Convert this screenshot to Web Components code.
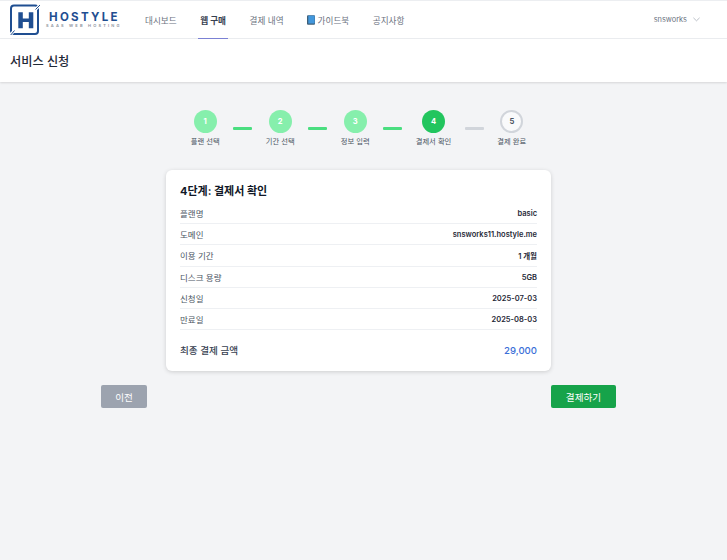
<!DOCTYPE html>
<html lang="ko">
<head>
<meta charset="utf-8">
<title>서비스 신청</title>
<style>
  html, body { margin: 0; padding: 0; }
  body {
    background: #f3f4f6;
    min-height: 560px;
    font-family: Inter, "Noto Sans CJK KR", sans-serif;
    color: #111827;
  }
</style>
</head>
<body>
<host-nav></host-nav>
<page-title>서비스 신청</page-title>
<step-bar>
  <step-item num="1" state="done">플랜 선택</step-item>
  <step-item num="2" state="done">기간 선택</step-item>
  <step-item num="3" state="done">정보 입력</step-item>
  <step-item num="4" state="current">결제서 확인</step-item>
  <step-item num="5" state="todo">결제 완료</step-item>
</step-bar>
<confirm-card heading="4단계: 결제서 확인">
  <info-row label="플랜명">basic</info-row>
  <info-row label="도메인">snsworks11.hostyle.me</info-row>
  <info-row label="이용 기간">1 개월</info-row>
  <info-row label="디스크 용량">5GB</info-row>
  <info-row label="신청일">2025-07-03</info-row>
  <info-row label="만료일">2025-08-03</info-row>
  <total-row label="최종 결제 금액">29,000</total-row>
</confirm-card>
<form-actions>
  <act-button kind="prev">이전</act-button>
  <act-button kind="pay">결제하기</act-button>
</form-actions>

<script>
class HostNav extends HTMLElement {
  constructor() {
    super();
    this.attachShadow({ mode: "open" }).innerHTML = `
      <style>
        :host {
          display: flex;
          align-items: stretch;
          height: 37px;
          background: #fff;
          border-top: 1px solid #eceef1;
          border-bottom: 1px solid #eceef1;
          padding-left: 10px;
          padding-right: 27px;
          font-size: 8.6px;
          color: #6b7280;
        }
        .logo { display: flex; align-items: center; gap: 6px; width: 124px; margin-right: 11px; }
        .word { display: flex; flex-direction: column; align-items: flex-start; margin-top: 1px; }
        .name {
          font: 700 11.5px/12px Inter, sans-serif;
          letter-spacing: 2.3px;
          color: #1f4e91;
          margin-left: 3px;
        }
        .sub {
          font: 600 4px/6px Inter, sans-serif;
          letter-spacing: 2.2px;
          color: #8b929c;
          white-space: nowrap;
        }
        nav { display: flex; gap: 23.5px; }
        a { display: flex; align-items: center; gap: 2.5px; color: inherit; white-space: nowrap; }
        a.on { color: #374151; font-weight: 600; box-shadow: 0 1px 0 0 #7c83d6; padding: 0 2px; margin: 0 -2px; }
        .user { margin-left: auto; display: flex; align-items: center; gap: 6px; font-size: 7.4px; }
      </style>
      <div class="logo">
        <svg width="30" height="31" viewBox="0 0 30 31">
          <rect x="1" y="1.5" width="27" height="28.5" rx="3" fill="none" stroke="#1f4e91" stroke-width="2"/>
          <path d="M25 6 L30 1 M0 31 L5 26" stroke="#fff" stroke-width="3"/>
          <path d="M25.5 5.5 L30 1 M.7 31 L4.5 26.5" stroke="#1f4e91" stroke-width="1"/>
          <path d="M8.3 8.3 H12.8 V14.5 H18.8 V8.3 H23.3 V24.3 H18.8 V18 H12.8 V24.3 H8.3 Z" fill="#1f4e91"/>
        </svg>
        <div class="word"><span class="name">HOSTYLE</span><span class="sub">SAAS WEB HOSTING</span></div>
      </div>
      <nav>
        <a>대시보드</a>
        <a class="on">웹 구매</a>
        <a>결제 내역</a>
        <a>
          <svg width="8" height="10" viewBox="0 0 8 10">
            <rect x="0" y=".2" width="8" height="9.6" rx="1" fill="#3f5f78"/>
            <rect x="1.3" y=".6" width="6.4" height="7.9" fill="#4297dc"/>
          </svg>가이드북</a>
        <a>공지사항</a>
      </nav>
      <div class="user">snsworks
        <svg width="7" height="5" viewBox="0 0 7 5"><path d="M.4 .8 L3.5 3.8 L6.6 .8" fill="none" stroke="#9ca3af" stroke-width=".7"/></svg>
      </div>`;
  }
}

class PageTitle extends HTMLElement {
  constructor() {
    super();
    this.attachShadow({ mode: "open" }).innerHTML = `
      <style>
        :host {
          display: flex;
          align-items: center;
          height: 43px;
          padding-left: 10px;
          background: #fff;
          box-shadow: 0 1px 2px rgba(0,0,0,.12);
          font-size: 12.2px;
          font-weight: 500;
          color: #1f2937;
          position: relative;
        }
      </style>
      <slot></slot>`;
  }
}

class StepBar extends HTMLElement {
  constructor() {
    super();
    this.attachShadow({ mode: "open" }).innerHTML = `
      <style>
        :host {
          display: flex;
          justify-content: center;
          margin-top: 28px;
          padding-right: 10px;
          height: 60px;
        }
      </style>
      <slot></slot>`;
  }
}

class StepItem extends HTMLElement {
  constructor() {
    super();
    const num = this.getAttribute("num");
    const state = this.getAttribute("state");
    this.attachShadow({ mode: "open" }).innerHTML = `
      <style>
        :host { display: flex; align-items: flex-start; }
        .col { display: flex; flex-direction: column; align-items: center; gap: 2.5px; min-width: 29px; }
        .dot {
          width: 23px; height: 23px; box-sizing: border-box;
          border-radius: 50%;
          display: flex; align-items: center; justify-content: center;
          font: 700 7.6px Inter, sans-serif;
          color: #fff;
          background: #86efac;
        }
        .current { background: #22c55e; }
        .todo { background: #f9fafb; border: 2px solid #d1d5db; color: #4b5563; }
        .label { font-size: 7.3px; line-height: 11px; color: #4b5563; white-space: nowrap; }
        .line { width: 19px; height: 3px; margin: 17px 13.5px 0; background: #4ade80; border-radius: 1px; }
        .line.off { background: #d1d5db; }
      </style>
      <div class="col">
        <div class="dot ${state}">${num}</div>
        <div class="label"><slot></slot></div>
      </div>
      ${num < 5 ? `<div class="line ${num == 4 ? "off" : ""}"></div>` : ""}`;
  }
}

class ConfirmCard extends HTMLElement {
  constructor() {
    super();
    this.attachShadow({ mode: "open" }).innerHTML = `
      <style>
        :host {
          display: block;
          box-sizing: border-box;
          width: 385px;
          height: 201px;
          margin: 0 auto;
          position: relative;
          left: -5px;
          padding: 14px 14px 0;
          background: #fff;
          border-radius: 6px;
          box-shadow: 0 1px 4px rgba(0,0,0,.16);
        }
        h3 { margin: 0 0 4px; font-size: 11px; line-height: 15px; font-weight: 700; color: #111827; }
      </style>
      <h3>${this.getAttribute("heading")}</h3>
      <slot></slot>`;
  }
}

class InfoRow extends HTMLElement {
  constructor() {
    super();
    this.attachShadow({ mode: "open" }).innerHTML = `
      <style>
        :host {
          display: flex;
          justify-content: space-between;
          align-items: center;
          box-sizing: border-box;
          height: 21.2px;
          border-bottom: 1px solid #eef0f3;
        }
        .k { color: #4b5563; font-size: 8.5px; }
        .v { color: #1f2937; font-size: 7.5px; font-weight: 600; padding-top: 1px; }
      </style>
      <span class="k">${this.getAttribute("label")}</span>
      <span class="v"><slot></slot></span>`;
  }
}

class TotalRow extends HTMLElement {
  constructor() {
    super();
    this.attachShadow({ mode: "open" }).innerHTML = `
      <style>
        :host {
          display: flex;
          justify-content: space-between;
          align-items: center;
          height: 40px;
          font-size: 9.6px;
          font-weight: 500;
        }
        .k { color: #374151; }
        .v { color: #3b6fd8; }
      </style>
      <span class="k">${this.getAttribute("label")}</span>
      <span class="v"><slot></slot></span>`;
  }
}

class FormActions extends HTMLElement {
  constructor() {
    super();
    this.attachShadow({ mode: "open" }).innerHTML = `
      <style>
        :host {
          display: flex;
          justify-content: space-between;
          margin-top: 14px;
          padding-left: 101px;
          padding-right: 111px;
        }
      </style>
      <slot></slot>`;
  }
}

class ActButton extends HTMLElement {
  constructor() {
    super();
    const pay = this.getAttribute("kind") === "pay";
    this.attachShadow({ mode: "open" }).innerHTML = `
      <style>
        :host {
          display: flex;
          align-items: center;
          justify-content: center;
          width: ${pay ? 65 : 46}px;
          height: 23px;
          border-radius: 2px;
          background: ${pay ? "#16a34a" : "#9ca3af"};
          color: #fff;
          font-size: 9.6px;
          font-weight: 400;
        }
      </style>
      <slot></slot>`;
  }
}

customElements.define("host-nav", HostNav);
customElements.define("page-title", PageTitle);
customElements.define("step-bar", StepBar);
customElements.define("step-item", StepItem);
customElements.define("confirm-card", ConfirmCard);
customElements.define("info-row", InfoRow);
customElements.define("total-row", TotalRow);
customElements.define("form-actions", FormActions);
customElements.define("act-button", ActButton);
</script>
</body>
</html>
